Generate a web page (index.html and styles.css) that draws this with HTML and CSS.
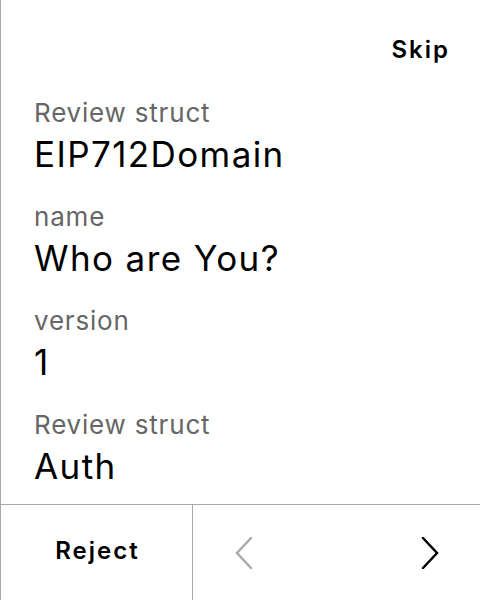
FILE: index.html
```html
<!DOCTYPE html>
<html>
<head>
<meta charset="utf-8">
<link rel="stylesheet" href="styles.css">
</head>
<body>
<div class="screen">
  <div class="header">
    <span class="skip">Skip</span>
  </div>
  <div class="content">
    <div class="field">
      <div class="label">Review struct</div>
      <div class="value">EIP712Domain</div>
    </div>
    <div class="field">
      <div class="label">name</div>
      <div class="value">Who are You?</div>
    </div>
    <div class="field">
      <div class="label">version</div>
      <div class="value">1</div>
    </div>
    <div class="field">
      <div class="label">Review struct</div>
      <div class="value">Auth</div>
    </div>
  </div>
  <div class="footer">
    <div class="reject">Reject</div>
    <div class="nav">
      <svg class="chev prev" width="18" height="32" viewBox="0 0 18 32"><path d="M16 1 L2 16 L16 31" fill="none" stroke="#aaaaaa" stroke-width="2.5" stroke-linecap="round" stroke-linejoin="miter"/></svg>
      <svg class="chev next" width="18" height="32" viewBox="0 0 18 32"><path d="M2 1 L16 16 L2 31" fill="none" stroke="#000" stroke-width="2.5" stroke-linecap="round" stroke-linejoin="miter"/></svg>
    </div>
  </div>
</div>
</body>
</html>
```

FILE: styles.css
```css
html, body {
  margin: 0;
  padding: 0;
  background: #fff;
}
.screen {
  width: 480px;
  height: 600px;
  box-sizing: border-box;
  border-left: 1px solid #a8a8a8;
  display: flex;
  flex-direction: column;
  font-family: Inter, "Noto Sans", sans-serif;
  color: #000;
  overflow: hidden;
}
.header {
  flex: 0 0 95px;
  box-sizing: border-box;
  padding-top: 4px;
  padding-right: 32px;
  display: flex;
  justify-content: flex-end;
  align-items: center;
}
.skip {
  font-size: 24px;
  font-weight: 600;
  letter-spacing: 2px;
  margin-right: -2px;
}
.content {
  flex: 1 1 auto;
  min-height: 0;
  overflow: hidden;
  padding-left: 33px;
  display: flex;
  flex-direction: column;
}
.field {
  flex: 0 0 104px;
}
.label {
  font-size: 26px;
  color: #666;
  line-height: 36px;
  letter-spacing: 0.8px;
}
.value {
  font-size: 35px;
  line-height: 47px;
  letter-spacing: 1.4px;
}
.footer {
  flex: 0 0 96px;
  box-sizing: border-box;
  border-top: 1px solid #a8a8a8;
  display: flex;
}
.reject {
  width: 192px;
  box-sizing: border-box;
  border-right: 1px solid #a8a8a8;
  padding: 0 0 4px 2px;
  display: flex;
  align-items: center;
  justify-content: center;
  font-size: 24px;
  font-weight: 600;
  letter-spacing: 2px;
}
.nav {
  flex: 1;
  display: flex;
  align-items: center;
  justify-content: space-between;
  padding: 0 41px 0 42px;
}
```
